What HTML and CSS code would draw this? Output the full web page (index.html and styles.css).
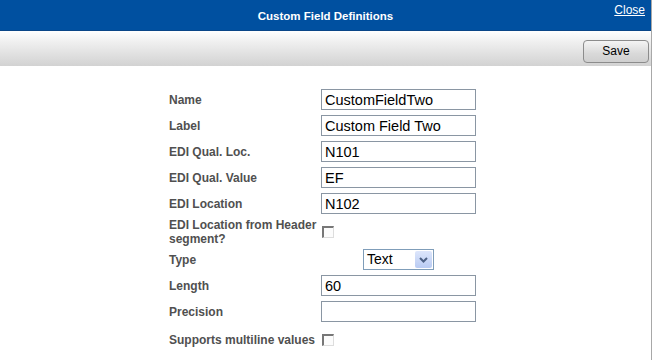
FILE: index.html
```html
<!DOCTYPE html>
<html lang="en">
<head>
  <meta charset="UTF-8">
  <title>Custom Field Definitions</title>
  <link rel="stylesheet" href="styles.css">
</head>
<body>
  <div class="dialog">
    <!-- Title bar -->
    <div class="titlebar">
      <span></span>
      <h1>Custom Field Definitions</h1>
      <a href="#" class="close">Close</a>
    </div>

    <!-- Toolbar -->
    <div class="toolbar">
      <button type="button" class="btn">Save</button>
    </div>

    <!-- Field form -->
    <form class="content">
      <table class="fields">
        <tr>
          <td class="lbl">Name</td>
          <td><input type="text" value="CustomFieldTwo"></td>
        </tr>
        <tr>
          <td class="lbl">Label</td>
          <td><input type="text" value="Custom Field Two"></td>
        </tr>
        <tr>
          <td class="lbl">EDI Qual. Loc.</td>
          <td><input type="text" value="N101"></td>
        </tr>
        <tr>
          <td class="lbl">EDI Qual. Value</td>
          <td><input type="text" value="EF"></td>
        </tr>
        <tr>
          <td class="lbl">EDI Location</td>
          <td><input type="text" value="N102"></td>
        </tr>
        <tr class="tall">
          <td class="lbl">EDI Location from Header segment?</td>
          <td><span class="check"></span></td>
        </tr>
        <tr>
          <td class="lbl">Type</td>
          <td class="center">
            <span class="select">
              <span class="select-value">Text</span>
              <span class="select-arrow">
                <svg width="9" height="6" viewBox="0 0 9 6"><path d="M1 1 L4.5 4.5 L8 1" fill="none" stroke="#4d6185" stroke-width="2"/></svg>
              </span>
            </span>
          </td>
        </tr>
        <tr>
          <td class="lbl">Length</td>
          <td><input type="text" value="60"></td>
        </tr>
        <tr>
          <td class="lbl">Precision</td>
          <td><input type="text" value=""></td>
        </tr>
        <tr class="last">
          <td class="lbl">Supports multiline values</td>
          <td><span class="check"></span></td>
        </tr>
      </table>
    </form>
  </div>
</body>
</html>
```

FILE: styles.css
```css
body {
  margin: 0;
  font-family: "Liberation Sans", Arial, sans-serif;
  background: #fff;
}
.dialog {
  height: 360px;
  border-right: 1px solid #a8a8a8;
  box-sizing: border-box;
  width: 652px;
}
.titlebar {
  display: grid;
  grid-template-columns: 1fr auto 1fr;
  height: 31px;
  background: #0050a0;
  border-bottom: 1px solid #0a4688;
  box-sizing: border-box;
  color: #fff;
}
.titlebar h1 {
  margin: 0;
  font-size: 11.5px;
  font-weight: bold;
  line-height: 32px;
}
.close {
  justify-self: end;
  color: #fff;
  font-size: 12px;
  line-height: 18px;
  margin-right: 6px;
  margin-top: 1px;
}
.toolbar {
  display: flex;
  justify-content: flex-end;
  align-items: center;
  height: 35px;
  padding-right: 2px;
  background: linear-gradient(#ffffff, #f0f0f0 30%, #d2d2d2);
  border-right: 1px solid #a8a8a8;
  margin-right: -1px;
}
.btn {
  width: 66px;
  height: 23px;
  margin-top: 5px;
  border: 1px solid #8c8c8c;
  border-radius: 4px;
  background: linear-gradient(#f4f4f4, #d9d9d9 60%, #cfcfcf);
  font-family: "Liberation Sans", Arial, sans-serif;
  font-size: 12px;
  color: #000;
  padding: 0;
}
.content {
  padding-top: 21px;
}
.fields {
  margin: 0 auto;
  border-collapse: collapse;
  position: relative;
  left: -3px;
}
.fields td {
  padding: 2px 0 3px 0;
  vertical-align: middle;
  font-size: 12px;
  line-height: 14px;
}
.fields td.lbl {
  width: 152px;
  color: #505050;
  font-weight: bold;
}
.fields tr.tall td {
  padding: 1px 0 1px 0;
}
.fields tr.last td {
  padding-top: 8px;
}
.fields td.center {
  text-align: center;
}
.fields input {
  display: block;
  width: 155px;
  height: 21px;
  box-sizing: border-box;
  border: 1px solid #8a96a3;
  padding: 1px 3px;
  font-family: "Liberation Sans", Arial, sans-serif;
  font-size: 14.5px;
  color: #000;
  margin: 0;
}
.check {
  display: block;
  width: 12px;
  height: 12px;
  margin-left: 1px;
  box-sizing: border-box;
  border-top: 2px solid #777;
  border-left: 2px solid #777;
  border-right: 1px solid #ddd;
  border-bottom: 1px solid #ddd;
  background: #fcfcfc;
}
.select {
  display: inline-flex;
  width: 71px;
  height: 21px;
  box-sizing: border-box;
  border: 1px solid #7f9db9;
  background: #fff;
  vertical-align: middle;
  text-align: left;
}
.select-value {
  flex: 1;
  font-size: 14px;
  line-height: 19px;
  padding-left: 3px;
}
.select-arrow {
  display: flex;
  align-items: center;
  justify-content: center;
  width: 17px;
  margin: 1px;
  background: linear-gradient(#dde6fb, #b9cbf3);
  border-radius: 2px;
}
```
